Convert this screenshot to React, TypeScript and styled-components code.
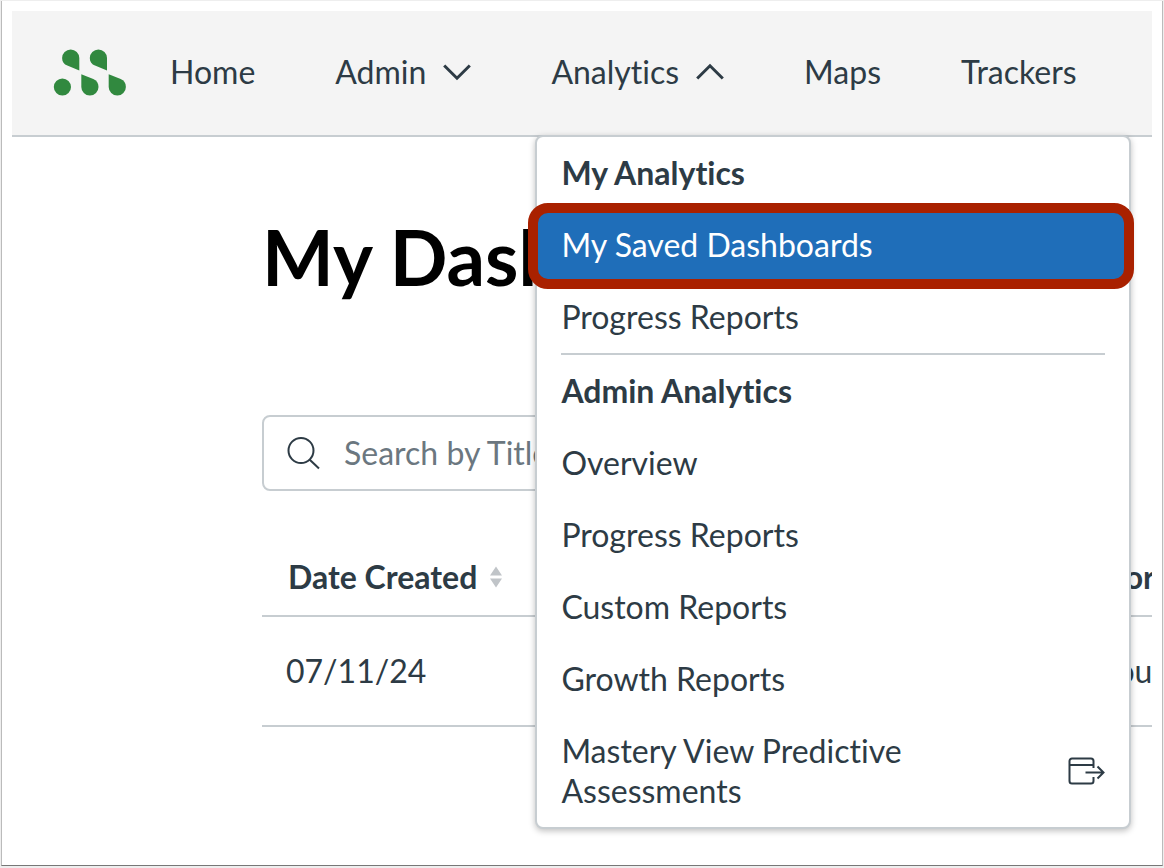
import React from "react";
import styled, { createGlobalStyle, css } from "styled-components";

const ink = "#2d3b45";
const line = "#c7cdd1";

const GlobalStyle = createGlobalStyle`
  *, *::before, *::after { box-sizing: border-box; }
  body {
    margin: 0;
    background: #fff;
    color: ${ink};
    font-family: Lato, "Liberation Sans", sans-serif;
    font-size: 32px;
    line-height: 40px;
    font-variant-ligatures: none;
  }
`;

const Page = styled.div`
  min-height: 100vh;
  padding: 1px 1px 2px;
  display: flex;
  background: #eee;
`;

const Frame = styled.div`
  flex: 1;
  min-width: 0;
  padding: 10px 10px;
  background: #fff;
  border: 1px solid #bbb;
  border-top-width: 0;
  border-bottom-color: #777;
`;

const Header = styled.header`
  display: flex;
  align-items: center;
  height: 126px;
  padding: 0 40px;
  background: #f4f4f4;
  border-bottom: 2px solid ${line};
`;

const LogoLink = styled.a`
  display: flex;
  margin-right: 44px;
`;

const Nav = styled.nav`
  display: flex;
  align-self: stretch;
  gap: 80px;
`;

const NavItem = styled.div`
  position: relative;
  display: flex;
  align-items: center;
`;

const navText = css`
  display: flex;
  align-items: center;
  gap: 17px;
  padding: 0 0 2px;
  border: 0;
  background: none;
  color: ${ink};
  font: inherit;
  font-variant-ligatures: none;
  text-decoration: none;
  cursor: pointer;
`;

const NavLink = styled.a`
  ${navText}
`;

const NavButton = styled.button`
  ${navText}
`;

const Menu = styled.div`
  position: absolute;
  z-index: 2;
  top: 100%;
  left: -16px;
  width: 596px;
  background: #fff;
  border: 2px solid ${line};
  border-radius: 8px;
  box-shadow: 0 2px 6px rgba(0, 0, 0, 0.25);
`;

const MenuHeading = styled.div`
  padding: 16px 24px;
  font-weight: 700;
`;

const MenuLink = styled.a<{ $selected?: boolean }>`
  position: relative;
  display: flex;
  align-items: center;
  justify-content: space-between;
  gap: 24px;
  padding: 16px 24px;
  color: ${(p) => (p.$selected ? "#fff" : ink)};
  background: ${(p) => (p.$selected ? "#1f6eb9" : "none")};
  text-decoration: none;
`;

const MenuText = styled.span`
  max-width: 400px;
`;

const Highlight = styled.span`
  position: absolute;
  inset: -6px -5px -8px -9px;
  border: 10px solid #a92100;
  border-radius: 20px;
`;

const MenuDivider = styled.hr`
  height: 2px;
  margin: 0 24px;
  border: 0;
  background: ${line};
`;

const Main = styled.main`
  padding: 70px 0 0 250px;
  overflow: hidden;
`;

const Title = styled.h1`
  margin: 0;
  color: #000;
  font-size: 76px;
  line-height: 100px;
  font-weight: 700;
  white-space: nowrap;
`;

const Search = styled.label`
  display: flex;
  align-items: center;
  gap: 24px;
  width: 600px;
  height: 76px;
  margin: 108px 0 47px;
  padding: 0 22px;
  border: 2px solid ${line};
  border-radius: 8px;
`;

const SearchInput = styled.input`
  flex: 1;
  min-width: 0;
  padding: 0;
  border: 0;
  outline: 0;
  background: none;
  color: ${ink};
  font: inherit;

  &::placeholder {
    color: #6b7780;
    opacity: 1;
  }
`;

const Table = styled.table`
  width: 100%;
  table-layout: fixed;
  border-collapse: collapse;
  text-align: left;
  white-space: nowrap;
`;

const HeadCell = styled.th<{ $last?: boolean }>`
  width: ${(p) => (p.$last ? "52px" : "auto")};
  height: 78px;
  padding: ${(p) => (p.$last ? "0 0 0 8px" : "0 0 0 26px")};
  border-bottom: 2px solid ${line};
  font-weight: 700;
`;

const Cell = styled.td<{ $last?: boolean }>`
  height: 110px;
  padding: ${(p) => (p.$last ? "0" : "0 0 0 24px")};
  border-bottom: 2px solid ${line};
`;

const SortButton = styled.button`
  display: flex;
  align-items: center;
  gap: 12px;
  padding: 0;
  border: 0;
  background: none;
  color: inherit;
  font: inherit;
`;

const Logo = () => (
  <svg width="74" height="48" viewBox="0 0 74 48" fill="#31893f" aria-hidden="true">
    <circle cx="10.400" cy="38" r="8.600" />
    <path d="M27.300 21.500V9.100a8.600 8.600 0 1 0-17.200 0c0 4 2 6.300 5.200 7.500z" />
    <path d="M55 21.500V9.100a8.600 8.600 0 1 0-17.200 0c0 4 2 6.300 5.200 7.500z" />
    <path d="M29.300 25.200V38a8.600 8.600 0 1 0 17.200 0c0-4-2-6.600-5.200-8z" />
    <path d="M56.700 25.200V38a8.600 8.600 0 1 0 17.200 0c0-4-2-6.600-5.200-8z" />
  </svg>
);

const Chevron = ({ up }: { up?: boolean }) => (
  <svg width="28" height="18" viewBox="0 0 28 18" fill="none" stroke={ink} strokeWidth="3" aria-hidden="true">
    <path d={up ? "M1.200 15.500 14 2.800l12.800 12.700" : "M1.200 2.500 14 15.200 26.800 2.500"} />
  </svg>
);

const SearchIcon = () => (
  <svg width="34" height="34" viewBox="0 0 34 34" fill="none" stroke={ink} strokeWidth="2" aria-hidden="true">
    <circle cx="15" cy="14.500" r="12.500" />
    <path d="M23.500 23.500 33 32.500" />
  </svg>
);

const SortIcon = () => (
  <svg width="14" height="22" viewBox="0 0 14 22" fill="#c0c4c8" aria-hidden="true">
    <path d="M1 9.500 7 0.500l6 9zM1 12.500h12l-6 9z" />
  </svg>
);

const OpenIcon = () => (
  <svg width="37" height="28" viewBox="0 0 37 28" fill="none" stroke={ink} strokeWidth="2" aria-hidden="true">
    <path d="M25.500 11V4a2.500 2.500 0 0 0-2.500-2.500H4A2.500 2.500 0 0 0 1.500 4v20A2.500 2.500 0 0 0 4 26.500h19a2.500 2.500 0 0 0 2.500-2.500v-4M1.500 8h24M17.500 15.500H35M29.500 9.500l6 6-6 6" />
  </svg>
);

export default function App() {
  return (
    <Page>
      <GlobalStyle />
      <Frame>
        <Header>
          <LogoLink href="#" aria-label="Mastery">
            <Logo />
          </LogoLink>
          <Nav>
            <NavItem>
              <NavLink href="#">Home</NavLink>
            </NavItem>
            <NavItem>
              <NavButton type="button" aria-expanded="false">
                Admin
                <Chevron />
              </NavButton>
            </NavItem>
            <NavItem>
              <NavButton type="button" aria-expanded="true">
                Analytics
                <Chevron up />
              </NavButton>
              <Menu>
                <MenuHeading>My Analytics</MenuHeading>
                <MenuLink href="#" $selected>
                  My Saved Dashboards
                  <Highlight />
                </MenuLink>
                <MenuLink href="#">Progress Reports</MenuLink>
                <MenuDivider />
                <MenuHeading>Admin Analytics</MenuHeading>
                <MenuLink href="#">Overview</MenuLink>
                <MenuLink href="#">Progress Reports</MenuLink>
                <MenuLink href="#">Custom Reports</MenuLink>
                <MenuLink href="#">Growth Reports</MenuLink>
                <MenuLink href="#">
                  <MenuText>Mastery View Predictive Assessments</MenuText>
                  <OpenIcon />
                </MenuLink>
              </Menu>
            </NavItem>
            <NavItem>
              <NavLink href="#">Maps</NavLink>
            </NavItem>
            <NavItem>
              <NavLink href="#">Trackers</NavLink>
            </NavItem>
          </Nav>
        </Header>
        <Main>
          <Title>My Dashboards</Title>
          <Search>
            <SearchIcon />
            <SearchInput type="search" placeholder="Search by Title" aria-label="Search by Title" />
          </Search>
          <Table>
            <thead>
              <tr>
                <HeadCell>
                  <SortButton type="button">
                    Date Created
                    <SortIcon />
                  </SortButton>
                </HeadCell>
                <HeadCell $last>For</HeadCell>
              </tr>
            </thead>
            <tbody>
              <tr>
                <Cell>07/11/24</Cell>
                <Cell $last>You</Cell>
              </tr>
            </tbody>
          </Table>
        </Main>
      </Frame>
    </Page>
  );
}
